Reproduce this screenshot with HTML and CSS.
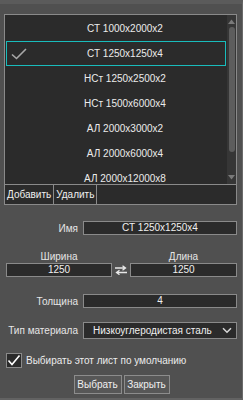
FILE: index.html
```html
<!DOCTYPE html>
<html>
<head>
<meta charset="utf-8">
<link rel="stylesheet" href="styles.css">
</head>
<body>
<div class="win">
  <div class="listbox">
    <div class="list">
      <div class="items">
        <div class="item">СТ 1000x2000x2</div>
        <div class="item sel"><svg class="check" width="16" height="12" viewBox="0 0 16 12"><path d="M1 6.5 L5.5 10.5 L15 1" fill="none" stroke="#a8a8a8" stroke-width="1.6"/></svg>СТ 1250x1250x4</div>
        <div class="item">НСт 1250x2500x2</div>
        <div class="item">НСт 1500x6000x4</div>
        <div class="item">АЛ 2000x3000x2</div>
        <div class="item">АЛ 2000x6000x4</div>
        <div class="item">АЛ 2000x12000x8</div>
      </div>
      <div class="scroll">
        <svg class="arrow" width="9" height="6" viewBox="0 0 9 6"><path d="M4.5 0.5 L8 5 L1 5 Z" fill="#7a7a7a"/></svg>
        <div class="thumb"></div>
        <div class="spacer"></div>
        <svg class="arrow down" width="9" height="6" viewBox="0 0 9 6"><path d="M1 1 L8 1 L4.5 5.5 Z" fill="#7a7a7a"/></svg>
      </div>
    </div>
    <div class="btnrow">
      <div class="tbtn">Добавить</div>
      <div class="tbtn">Удалить</div>
    </div>
  </div>

  <div class="row first">
    <div class="lbl">Имя</div>
    <div class="field">СТ 1250x1250x4</div>
  </div>

  <div class="dims">
    <div class="dim left">
      <div class="dlbl">Ширина</div>
      <div class="field">1250</div>
    </div>
    <div class="swap">
      <svg width="12" height="10" viewBox="0 0 12 10"><path d="M0 3 H10 M7.5 0.8 L10.5 3 L7.5 5.2" fill="none" stroke="#e8e8e8" stroke-width="1.3"/><path d="M12 7.5 H2 M4.5 5.3 L1.5 7.5 L4.5 9.7" fill="none" stroke="#e8e8e8" stroke-width="1.3"/></svg>
    </div>
    <div class="dim right">
      <div class="dlbl">Длина</div>
      <div class="field">1250</div>
    </div>
  </div>

  <div class="row thick">
    <div class="lbl">Толщина</div>
    <div class="field">4</div>
  </div>

  <div class="row mat">
    <div class="lbl">Тип материала</div>
    <div class="select">
      <span>Низкоуглеродистая сталь</span>
      <svg class="chev" width="10" height="7" viewBox="0 0 10 7"><path d="M1 1.2 L5 5.2 L9 1.2" fill="none" stroke="#d8d8d8" stroke-width="1.5"/></svg>
    </div>
  </div>

  <div class="chkrow">
    <div class="chk"><svg width="14" height="13" viewBox="0 0 14 13"><path d="M1.5 6.5 L5 10.5 L12.5 1.5" fill="none" stroke="#ffffff" stroke-width="1.6"/></svg></div>
    <div class="chklbl">Выбирать этот лист по умолчанию</div>
  </div>

  <div class="actions">
    <div class="btn b1">Выбрать</div>
    <div class="btn b2">Закрыть</div>
  </div>
</div>
</body>
</html>
```
FILE: styles.css
```css
html, body {
  margin: 0;
  padding: 0;
  background: #4f4f4f;
}
body {
  width: 243px;
  height: 400px;
  overflow: hidden;
  font-family: "Liberation Sans", Arial, sans-serif;
  font-size: 10px;
  color: #ececec;
}
.win {
  box-sizing: border-box;
  width: 243px;
  height: 400px;
  background: #505050;
  border-top: 4px solid #5b5b5b;
  border-right: 1px solid #6a6a6a;
  border-bottom: 2px solid #626262;
  padding-top: 10px;
  display: flex;
  flex-direction: column;
}
.listbox {
  margin: 0 5px 0 4px;
  border: 1px solid #8a8a8a;
  background: #2b2b2b;
}
.list {
  display: flex;
  height: 169px;
  overflow: hidden;
}
.items {
  flex: 1;
  padding-top: 1px;
}
.item {
  height: 25px;
  line-height: 25px;
  margin: 0 0 0 1px;
  padding-left: 18px;
  text-align: center;
  box-sizing: border-box;
  position: relative;
  white-space: nowrap;
}
.item.sel {
  border: 1px solid #19bcbc;
  line-height: 23px;
}
.check {
  position: absolute;
  left: 4px;
  top: 6px;
}
.scroll {
  width: 9px;
  margin-left: 1px;
  background: #363636;
  display: flex;
  flex-direction: column;
  align-items: center;
}
.arrow {
  margin-top: 4px;
  flex: none;
}
.arrow.down {
  margin-top: 0;
  margin-bottom: 4px;
}
.thumb {
  width: 6px;
  height: 125px;
  margin-top: 2px;
  background: #5d5d5d;
  border-radius: 3px;
  flex: none;
}
.spacer { flex: 1; }
.btnrow {
  display: flex;
  height: 19px;
  border-top: 1px solid #8a8a8a;
}
.tbtn {
  line-height: 19px;
  padding: 0 2px;
  border-right: 1px solid #8a8a8a;
  color: #f0f0f0;
}
.row {
  display: flex;
  align-items: center;
}
.lbl {
  width: 78px;
  text-align: right;
  margin-right: 5px;
  color: #e6e6e6;
}
.field {
  box-sizing: border-box;
  height: 14px;
  line-height: 12px;
  border: 1px solid #8a8a8a;
  background: #2b2b2b;
  text-align: center;
  color: #f0f0f0;
}
.row .field { width: 154px; }
.first { margin-top: 16px; }
.dims {
  display: flex;
  align-items: flex-end;
  margin-top: 15px;
  padding-left: 6px;
}
.dim { display: flex; flex-direction: column; }
.dim.left { width: 106px; }
.dim.right { width: 107px; }
.dlbl {
  text-align: center;
  line-height: 13px;
  color: #e6e6e6;
}
.swap {
  width: 18px;
  height: 14px;
  display: flex;
  align-items: center;
  justify-content: center;
}
.thick { margin-top: 17px; }
.mat { margin-top: 14px; }
.select {
  box-sizing: border-box;
  width: 154px;
  height: 17px;
  border: 1px solid #8a8a8a;
  background: #2b2b2b;
  display: flex;
  align-items: center;
  justify-content: space-between;
  padding: 0 4px 0 9px;
  color: #f0f0f0;
}
.chkrow {
  display: flex;
  align-items: center;
  margin-top: 14px;
  padding-left: 6px;
}
.chk {
  box-sizing: border-box;
  width: 16px;
  height: 15px;
  border: 1px solid #8a8a8a;
  background: #2b2b2b;
  display: flex;
  align-items: center;
  justify-content: center;
  margin-right: 4px;
}
.chklbl { color: #ececec; }
.actions {
  display: flex;
  justify-content: center;
  gap: 2px;
  margin-top: 7px;
  padding-left: 1px;
}
.btn {
  box-sizing: border-box;
  height: 19px;
  line-height: 17px;
  border: 1px solid #8c8c8c;
  background: #575757;
  color: #f0f0f0;
  text-align: center;
}
.b1 { width: 48px; }
.b2 { width: 46px; }
```
